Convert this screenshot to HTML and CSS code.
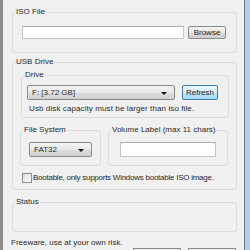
FILE: index.html
```html
<!DOCTYPE html>
<html lang="en">
<head>
  <meta charset="UTF-8" />
  <title>ISO to USB</title>
  <link rel="stylesheet" href="styles.css">
</head>
<body>
  <div class="window">

    <fieldset class="group iso-group">
      <legend>ISO File</legend>
      <div class="row">
        <input class="text-input iso-path" type="text">
        <button class="btn browse-btn">Browse</button>
      </div>
    </fieldset>

    <fieldset class="group usb-group">
      <legend>USB Drive</legend>

      <fieldset class="group drive-group">
        <legend>Drive</legend>
        <div class="row">
          <div class="combo drive-combo">F: [3.72 GB]<span class="arrow"></span></div>
          <button class="btn refresh-btn">Refresh</button>
        </div>
        <p class="note">Usb disk capacity must be larger than iso file.</p>
      </fieldset>

      <div class="split">
        <fieldset class="group fs-group">
          <legend>File System</legend>
          <div class="combo fs-combo">FAT32<span class="arrow"></span></div>
        </fieldset>
        <fieldset class="group label-group">
          <legend>Volume Label (max 11 chars)</legend>
          <input class="text-input label-input" type="text">
        </fieldset>
      </div>

      <label class="check-row">
        <span class="checkbox"></span>
        Bootable, only supports Windows bootable ISO image.
      </label>
    </fieldset>

    <fieldset class="group status-group">
      <legend>Status</legend>
    </fieldset>

    <p class="freeware">Freeware, use at your own risk.</p>

    <!-- bottom buttons run off the window edge, only their tops show -->
    <div class="actions">
      <button class="btn action-btn" aria-label="Burn"></button>
      <button class="btn action-btn" aria-label="Exit"></button>
    </div>

  </div>
</body>
</html>
```

FILE: styles.css
```css
* {
  box-sizing: border-box;
}

body {
  margin: 0;
  background: #f0f0f0;
  font-family: 'Liberation Sans', Arial, sans-serif;
  font-size: 8px;
  line-height: 10px;
  color: #2b2b2b;
}

.window {
  width: 250px;
  height: 250px;
  overflow: hidden;
  border-left: 3px solid #8d8d8d;
  border-right: 5px solid #b9cde0;
  box-shadow: inset -1px 0 0 #6d7f92;
  padding: 7px 8px 0 9px;
  background: #f0f0f0;
}

.group {
  margin: 0;
  padding: 0;
  border: 1px solid #dcdcdc;
  border-radius: 3px;
  min-width: 0;
}

.group legend {
  margin-left: 2px;
  padding: 0 1px;
  line-height: 10px;
}

.row {
  display: flex;
  align-items: center;
}

.text-input {
  display: block;
  margin: 0;
  padding: 0;
  height: 13px;
  background: #fff;
  border: 1px solid #c5c5c5;
  border-top-color: #abadb3;
  outline: none;
}

.btn {
  margin: 0;
  padding: 0;
  font: inherit;
  color: #222;
  border: 1px solid #8a8a8a;
  border-radius: 2px;
  background: linear-gradient(#f4f4f4, #e6e6e6 50%, #d8d8d8 51%, #d0d0d0);
}

.combo {
  position: relative;
  height: 15px;
  padding: 2px 0 0 4px;
  border: 1px solid #8a8a8a;
  border-radius: 2px;
  background: linear-gradient(#f4f4f4, #e8e8e8 50%, #dcdcdc 51%, #d2d2d2);
}

.arrow {
  position: absolute;
  right: 7px;
  top: 6px;
  border-left: 3px solid transparent;
  border-right: 3px solid transparent;
  border-top: 3px solid #111;
}

/* ISO file */
.iso-group .row {
  margin: 9px 0 13px 9px;
}

.iso-path {
  width: 162px;
}

.browse-btn {
  margin-left: 4px;
  width: 38px;
  height: 13px;
  line-height: 11px;
}

/* USB drive */
.usb-group {
  margin-top: 4px;
}

.drive-group {
  margin: 3px 7px 0 8px;
}

.drive-group .row {
  margin: 5px 0 0 5px;
}

.drive-combo {
  width: 148px;
}

.refresh-btn {
  margin-left: 7px;
  width: 36px;
  height: 15px;
  border-color: #3c7fb1;
  background: linear-gradient(#eaf6fd, #d9f0fc 50%, #bee6fd 51%, #a7d9f5);
}

.note {
  margin: 4px 0 3px 7px;
  letter-spacing: 0.1px;
}

.split {
  display: flex;
  margin: 7px 8px 0 7px;
  gap: 7px;
}

.fs-group {
  width: 81px;
}

.label-group {
  flex: 1;
}

.fs-combo {
  width: 63px;
  margin: 7px 0 8px 8px;
}

.label-input {
  width: 96px;
  height: 15px;
  margin: 7px 0 8px 11px;
}

.check-row {
  display: flex;
  align-items: center;
  margin: 7px 0 6px 9px;
  letter-spacing: -0.25px;
}

.checkbox {
  width: 10px;
  height: 10px;
  margin-right: 1px;
  border: 1px solid #8f8f8f;
  background: linear-gradient(135deg, #dcdcdc, #fdfdfd);
}

/* status */
.status-group {
  margin-top: 7px;
  height: 35px;
}

.freeware {
  margin: 6px 0 0 -1px;
}

.actions {
  display: flex;
  justify-content: flex-end;
  gap: 7px;
  margin-top: 0;
  padding-right: 1px;
}

.action-btn {
  width: 48px;
  height: 16px;
  border-radius: 0;
}
```
